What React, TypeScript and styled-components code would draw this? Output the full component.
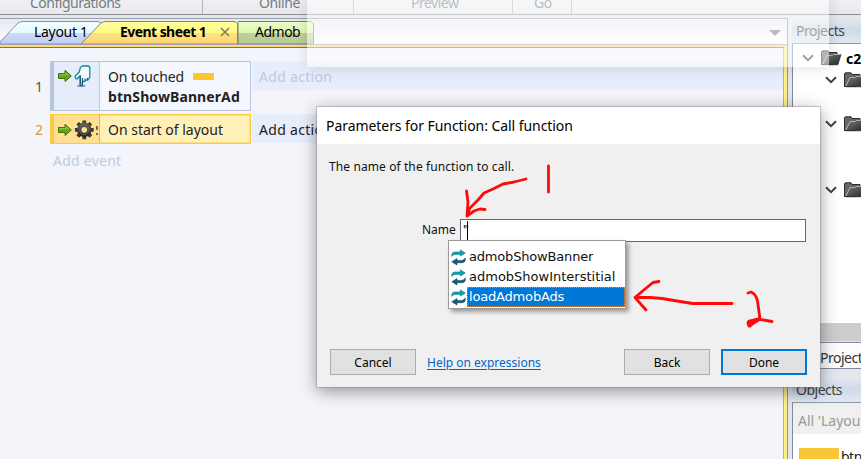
import React from "react";
import styled, { createGlobalStyle, css } from "styled-components";

const GlobalStyle = createGlobalStyle`
  *, *::before, *::after { box-sizing: border-box; }
  html, body { margin: 0; padding: 0; overflow: hidden; }
`;

const ui = `"Noto Sans", "Open Sans", sans-serif`;
const dialogFont = `"Noto Sans", "DejaVu Sans", sans-serif`;

const Window = styled.div`
  position: relative;
  width: 861px;
  height: 459px;
  overflow: hidden;
  display: flex;
  flex-direction: column;
  background: #e3e6ec;
  font-family: ${ui};
  font-size: 14px;
  color: #222;
`;

const Text = styled.span<{ $track?: number }>`
  white-space: pre;
  letter-spacing: ${(p) => p.$track ?? 0}px;
`;

/* Ribbon */
const Ribbon = styled.header`
  display: flex;
  flex: none;
  height: 15px;
  background: linear-gradient(#eef0f4, #e7e9ed);
  border-bottom: 1px solid #8f9094;
  overflow: hidden;
`;

const RibbonGroup = styled.div<{ $width: number; $pad: number }>`
  flex: none;
  width: ${(p) => p.$width}px;
  padding-left: ${(p) => p.$pad}px;
  border-right: 1px solid #b4b6ba;
  color: #777b82;
  line-height: 20px;
  margin-top: -7px;
`;

/* Workspace */
const Workspace = styled.div`
  display: flex;
  flex: 1;
  min-height: 0;
  padding-top: 3px;
`;

const Editor = styled.main`
  display: flex;
  flex-direction: column;
  flex: none;
  width: 788px;
  border-top: 1px solid #9a9fab;
  border-right: 1px solid #8e96a6;
`;

const TabStrip = styled.nav`
  display: flex;
  align-items: flex-end;
  flex: none;
  height: 26px;
  background: linear-gradient(#e6e9ee, #fdfdfe);
  border-bottom: 1px solid #a0a5b4;
`;

const Tab = styled.div<{ $width: number; $overlap?: number; $pad: number; $bold?: boolean }>`
  position: relative;
  display: flex;
  align-items: center;
  flex: none;
  width: ${(p) => p.$width}px;
  height: 24px;
  margin-left: ${(p) => -(p.$overlap ?? 0)}px;
  padding-left: ${(p) => p.$pad}px;
  padding-bottom: 1px;
  color: #000;
  font-weight: ${(p) => (p.$bold ? 700 : 400)};
`;

const TabShape = styled.svg`
  position: absolute;
  left: 0;
  top: 0;
`;

const TabContent = styled.div`
  position: relative;
  display: flex;
  align-items: center;
  gap: 14px;
`;

const TabMenu = styled.svg`
  margin: 0 6px 7px auto;
`;

const SheetFrame = styled.div`
  flex: 1;
  display: flex;
  border-right: 3px solid #fbf088;
  border-top: 2px solid #ffd978;
`;

const Sheet = styled.div`
  flex: 1;
  display: flex;
  flex-direction: column;
  border-top: 1px solid #77706c;
  border-right: 1px solid #aab0c0;
  background: #f4f5fb;
  padding: 13px 0 0 35px;
`;

const EventRow = styled.div<{ $height: number }>`
  display: flex;
  flex: none;
  height: ${(p) => p.$height}px;
  margin-bottom: 3px;
`;

const EventNumber = styled.div<{ $active?: boolean }>`
  display: flex;
  align-items: center;
  width: 15px;
  color: ${(p) => (p.$active ? "#de9a20" : "#754638")};
`;

const EventBlock = styled.div<{ $active?: boolean }>`
  display: flex;
  width: 201px;
  border: 1px solid #b7c5de;
  border-left-width: 4px;
  background: #f4f8fe;
  ${(p) =>
    p.$active &&
    css`
      border-color: #fdcb43;
      background: #fff0b8;
      box-shadow: inset 0 0 0 1px #ffdf80;
    `}
`;

const IconCell = styled.div<{ $active?: boolean }>`
  display: flex;
  width: 46px;
  height: 100%;
  padding: ${(p) => (p.$active ? 4 : 3)}px 0 0 4px;
  overflow: hidden;
  border-right: 1px solid ${(p) => (p.$active ? "#ddb853" : "#c1cad8")};
  background: ${(p) => (p.$active ? "#ffdf91" : "#e4edf9")};
  svg { flex: none; }
`;

const Condition = styled.div`
  flex: 1;
  padding: 5px 0 0 8px;
  line-height: 20px;
`;

const ConditionLine = styled.div`
  display: flex;
  align-items: center;
`;

const Swatch = styled.i`
  width: 21px;
  height: 7px;
  margin-left: 9px;
  margin-top: -1px;
  background: #fdc62e;
`;

const Action = styled.div<{ $dim?: boolean }>`
  flex: 1;
  height: 29px;
  margin-left: 1px;
  padding-left: 7px;
  line-height: 32px;
  background: #e7edfa;
  color: ${(p) => (p.$dim ? "#bdcae0" : "#222")};
`;

const AddEvent = styled.div`
  padding: 2px 0 0 18px;
  line-height: 24px;
  color: #bdcae0;
`;

/* Side panels */
const Sidebar = styled.aside`
  display: flex;
  flex-direction: column;
  flex: 1;
  margin-left: 4px;
  min-width: 0;
  overflow: hidden;
`;

const PanelTitle = styled.div`
  flex: none;
  height: 26px;
  padding-left: 4px;
  line-height: 26px;
  letter-spacing: -0.5px;
  color: #444;
  background: linear-gradient(#e5e9f0, #cfdae8 45%, #e0e8f2);
  border-bottom: 1px solid #9199a8;
`;

const Tree = styled.div`
  flex: none;
  height: 279px;
  padding-top: 3px;
  background: #fff;
  border-left: 1px solid #7f8ba0;
`;

const TreeRow = styled.div<{ $depth: number; $after?: number }>`
  display: flex;
  align-items: center;
  height: 22px;
  margin-bottom: ${(p) => p.$after ?? 0}px;
  padding-left: ${(p) => 9 + p.$depth * 23}px;
  font-weight: 700;
  color: #000;
  svg { flex: none; }
`;

const TreeGap = styled.span`
  flex: none;
  width: 7px;
`;

const ProjectName = styled.span`
  margin-left: 4px;
`;

const ScrollTrack = styled.div`
  flex: none;
  height: 18px;
  background: #cdcdcd;
  border-left: 1px solid #7f8ba0;
`;

const BottomTab = styled.div`
  flex: none;
  height: 27px;
  margin: 1px -4px 0 0;
  padding-left: 27px;
  line-height: 29px;
  letter-spacing: -0.5px;
  color: #333;
  background: #fdfdfe;
  border: 1px solid #7f8ba0;
`;

const ObjectsPanel = styled.section`
  display: flex;
  flex-direction: column;
  flex: 1;
  margin-top: 8px;
`;

const ObjectFilter = styled.div`
  flex: none;
  height: 31px;
  padding-left: 5px;
  line-height: 36px;
  background: #f0f0f0;
  border-left: 1px solid #7f8ba0;
  color: #9a9a9a;
`;

const ObjectList = styled.div`
  display: flex;
  gap: 2px;
  flex: 1;
  padding: 14px 0 0 6px;
  background: #fff;
  border-left: 1px solid #7f8ba0;
  color: #222;
  line-height: 17px;
  letter-spacing: -0.5px;
`;

const ObjectThumb = styled.i`
  flex: none;
  width: 40px;
  height: 14px;
  background: #f9c733;
`;

/* Floating layers */
const GhostWindow = styled.div`
  position: absolute;
  left: 307px;
  top: -10px;
  width: 522px;
  height: 77px;
  background: rgba(255, 255, 255, 0.5);
  box-shadow: 0 1px 14px rgba(0, 0, 0, 0.12);
`;

const Dialog = styled.section`
  position: absolute;
  left: 317px;
  top: 107px;
  width: 503px;
  height: 280px;
  display: flex;
  flex-direction: column;
  background: #f0f0f0;
  font-family: ${dialogFont};
  font-size: 12px;
  color: #111;
  box-shadow: 0 0 0 1px rgba(120, 120, 130, 0.35), 0 4px 16px rgba(0, 0, 0, 0.42);
`;

const DialogTitle = styled.h1`
  flex: none;
  margin: 0;
  height: 37px;
  padding-left: 9px;
  background: #fff;
  font-family: ${ui};
  font-size: 14px;
  font-weight: 400;
  line-height: 38px;
  color: #000;
`;

const Prompt = styled.p`
  margin: 13px 0 0 12px;
  line-height: 20px;
`;

const Field = styled.div`
  position: relative;
  display: flex;
  align-items: center;
  margin: 42px 14px 0 105px;
`;

const FieldName = styled.label`
  width: 38px;
  height: 20px;
  line-height: 17px;
`;

const Input = styled.div`
  display: flex;
  flex: 1;
  height: 23px;
  padding: 1px 0 0 2px;
  background: #fff;
  border: 1px solid #686868;
`;

const Quote = styled.span`
  width: 4px;
  color: #24384c;
  font-size: 12px;
  font-weight: 700;
  line-height: 17px;
  letter-spacing: -1px;
`;

const Caret = styled.i`
  width: 1px;
  height: 19px;
  background: #000;
`;

const Suggestions = styled.ul`
  position: absolute;
  left: 26px;
  top: 21px;
  width: 178px;
  height: 69px;
  margin: 0;
  padding: 6px 0 0 2px;
  list-style: none;
  background: #fff;
  border: 1px solid #999;
  box-shadow: 3px 3px 4px rgba(0, 0, 0, 0.35);
  font-family: "DejaVu Sans", sans-serif;
  font-size: 13px;
`;

const Suggestion = styled.li`
  display: flex;
  height: 20px;
  svg { flex: none; margin-top: 2px; }
`;

const SuggestionText = styled.span<{ $selected?: boolean }>`
  flex: 1;
  margin-left: 1px;
  padding-left: 2px;
  line-height: 20px;
  ${(p) =>
    p.$selected &&
    css`
      color: #fff;
      background: #0078d7;
      line-height: 17px;
      padding-left: 1px;
      border: 1px dotted #d98a50;
    `}
`;

const Buttons = styled.footer`
  display: flex;
  align-items: center;
  height: 26px;
  margin: auto 13px 12px;
`;

const Button = styled.button<{ $primary?: boolean; $push?: boolean }>`
  width: 86px;
  height: 26px;
  padding: 1px 0 0;
  background: #e1e1e1;
  border: ${(p) => (p.$primary ? "2px solid #0078d7" : "1px solid #adadad")};
  margin-left: ${(p) => (p.$push ? "auto" : p.$primary ? "11px" : "0")};
  font-family: ${dialogFont};
  font-size: 12px;
  line-height: 20px;
  color: #000;
`;

const HelpLink = styled.a`
  margin-left: 11px;
  color: #0066cc;
  text-decoration: underline;
  text-underline-offset: 2px;
`;

const Markup = styled.svg`
  position: absolute;
  left: 0;
  top: 0;
  pointer-events: none;
`;

const GreenArrow = () => (
  <svg width="15" height="22" viewBox="0 0 15 22">
    <path d="M.5 8.5H7V5.2L13.3 11L7 16.5V13.5H.5Z" fill="#68a615" stroke="#3d7212" />
    <path d="M1.5 9.7H8V7.8l3 2.8" fill="none" stroke="#9bcf3c" />
  </svg>
);

const HandIcon = () => (
  <svg width="19" height="23" viewBox="0 0 19 23">
    <path
      d="M7.5 2.2L9.5 1H15.5L16.8 2.5V12L15 15H13L11.5 16.5H9.4V20.5H7.2V10.5L4 14L2.3 13V11L6.2 7Z"
      fill="#f4fbff"
      stroke="#0e86a3"
      strokeWidth="1.3"
      strokeLinejoin="round"
    />
    <path d="M7.2 11V20.5H9.4V13M12 13.5V15.5M14.5 13V14.5" fill="none" stroke="#12455e" />
    <ellipse cx="8.3" cy="21" rx="4.5" ry="1.1" fill="#55717f" opacity=".7" />
  </svg>
);

const GearIcon = () => (
  <svg width="22" height="22" viewBox="0 0 22 22">
    <defs>
      <linearGradient id="gear" x2="0" y2="1">
        <stop offset="0" stopColor="#68625a" />
        <stop offset="1" stopColor="#26231f" />
      </linearGradient>
    </defs>
    <g fill="#3c3832">
      {[0, 45, 90, 135].map((a) => (
        <rect key={a} x="9.4" y="1.4" width="3.8" height="18.8" rx=".5" transform={`rotate(${a} 11.3 10.8)`} />
      ))}
    </g>
    <circle cx="11.3" cy="10.8" r="7.3" fill="url(#gear)" />
    <circle cx="11.3" cy="10.8" r="4.6" fill="none" stroke="#777067" strokeWidth=".8" />
    <circle cx="11.3" cy="10.8" r="2.9" fill="#ffdf91" />
  </svg>
);

/* Left edge of the object name, all that fits in the narrow column */
const NameSliver = ({ marks }: { marks: [number, number][] }) => (
  <svg width="3" height="20" viewBox="0 0 3 20">
    {marks.map(([y, h]) => (
      <rect key={y} x="1" y={y} width="2" height={h} fill="#5d4a3a" opacity=".8" />
    ))}
  </svg>
);

const FolderIcon = () => (
  <svg width="21" height="16" viewBox="0 0 21 16">
    <defs>
      <linearGradient id="folderFront" x2="1" y2="1">
        <stop offset="0" stopColor="#7b7b7b" />
        <stop offset="1" stopColor="#262626" />
      </linearGradient>
    </defs>
    <path d="M.5 15V1.5L1.5.8H7L8 2.5H16V6L12 14.5H.5Z" fill="#676767" stroke="#2b2b2b" />
    <path d="M2 14.8L6.3 6H12L13.5 4.5H20L16.8 14.8Z" fill="url(#folderFront)" stroke="#262626" strokeWidth=".7" />
    <path d="M2 14L6 5.7H11.5L13 4.4H19.5" fill="none" stroke="#cfcfcf" strokeWidth=".9" />
  </svg>
);

const Chevron = () => (
  <svg width="12" height="8" viewBox="0 0 12 8">
    <path d="M1 1.2L6 6.2L11 1.2" fill="none" stroke="#404040" strokeWidth="2" />
  </svg>
);

const FunctionIcon = () => (
  <svg width="15" height="17" viewBox="0 0 15 17">
    <path d="M.7 7.5V5.5Q1.2 2.9 4 2.9H9.3V.8L14.3 4L9.3 7.2V5.4H4.5Q2 5.4.7 7.5Z" fill="#11a0b0" stroke="#087386" strokeWidth=".5" />
    <path d="M14.3 9V11Q14 13.8 11 13.8H6V16L.8 12.8L6 9.6V11.4H10.5Q13 11.4 14.3 9Z" fill="#155e7b" stroke="#0b3d5e" strokeWidth=".5" />
  </svg>
);

const Gradient = ({ id, stops }: { id: string; stops: [string, string, string, string] }) => (
  <linearGradient id={id} x2="0" y2="1">
    <stop offset="0" stopColor={stops[0]} />
    <stop offset=".5" stopColor={stops[1]} />
    <stop offset=".51" stopColor={stops[2]} />
    <stop offset="1" stopColor={stops[3]} />
  </linearGradient>
);

const TreeFolder = ({ depth, after, name }: { depth: number; after?: number; name?: string }) => (
  <TreeRow $depth={depth} $after={after}>
    <Chevron />
    <TreeGap />
    <FolderIcon />
    {name && <ProjectName>{name}</ProjectName>}
  </TreeRow>
);

export default function App() {
  return (
    <Window>
      <GlobalStyle />
      <Ribbon>
        <RibbonGroup $width={203} $pad={30}><Text $track={-0.5}>Configurations</Text></RibbonGroup>
        <RibbonGroup $width={151} $pad={56}><Text $track={-0.4}>Online</Text></RibbonGroup>
        <RibbonGroup $width={159} $pad={57}><Text $track={-0.5}>Preview</Text></RibbonGroup>
        <RibbonGroup $width={59} $pad={21}><Text $track={-0.5}>Go</Text></RibbonGroup>
      </Ribbon>

      <Workspace>
        <Editor>
          <TabStrip>
            <Tab $width={102} $pad={34}>
              <TabShape width="102" height="24">
                <defs><Gradient id="layoutTab" stops={["#f3ffff", "#e6f9ff", "#cddcf9", "#c0ccf0"]} /></defs>
                <path d="M0 22L18 3Q20 1.5 23 1.5H98L101 3V24H0Z" fill="url(#layoutTab)" stroke="#8492a8" />
              </TabShape>
              <TabContent><Text $track={-0.3}>Layout 1</Text></TabContent>
            </Tab>
            <Tab $width={157} $overlap={21} $pad={39} $bold>
              <TabShape width="157" height="24">
                <defs><Gradient id="sheetTab" stops={["#ffff9b", "#fffa87", "#ffe37e", "#ffd574"]} /></defs>
                <path d="M0 24L20 3Q22 1.5 25 1.5H154L156.5 3V24Z" fill="url(#sheetTab)" stroke="#8a8573" />
              </TabShape>
              <TabContent>
                <Text $track={-0.56}>Event sheet 1</Text>
                <svg width="10" height="10"><path d="M1 1L9 9M9 1L1 9" stroke="#85805f" strokeWidth="1.7" /></svg>
              </TabContent>
            </Tab>
            <Tab $width={76} $pad={17}>
              <TabShape width="76" height="24">
                <defs><Gradient id="admobTab" stops={["#eaffc6", "#dcf5b4", "#bed09b", "#b8cb93"]} /></defs>
                <path d="M0 24V1.5H73L75.5 4V24Z" fill="url(#admobTab)" stroke="#77846d" />
              </TabShape>
              <TabContent><Text $track={-0.5}>Admob</Text></TabContent>
            </Tab>
            <TabMenu width="12" height="7"><path d="M0 0H12L6 6Z" fill="#777" /></TabMenu>
          </TabStrip>
          <SheetFrame>
            <Sheet>
              <EventRow $height={50}>
                <EventNumber>1</EventNumber>
                <EventBlock>
                  <IconCell><GreenArrow /><HandIcon /><TreeGap /><NameSliver marks={[[6, 1]]} /></IconCell>
                  <Condition>
                    <ConditionLine><Text $track={-0.12}>On touched</Text><Swatch /></ConditionLine>
                    <b><Text $track={0.1}>btnShowBannerAd</Text></b>
                  </Condition>
                </EventBlock>
                <Action $dim><Text $track={0.3}>Add action</Text></Action>
              </EventRow>
              <EventRow $height={30}>
                <EventNumber $active>2</EventNumber>
                <EventBlock $active>
                  <IconCell $active>
                    <GreenArrow />
                    <GearIcon />
                    <NameSliver marks={[[7, 4], [14, 2]]} />
                  </IconCell>
                  <Condition><Text>On start of layout</Text></Condition>
                </EventBlock>
                <Action><Text $track={0.3}>Add action</Text></Action>
              </EventRow>
              <AddEvent><Text $track={0.25}>Add event</Text></AddEvent>
            </Sheet>
          </SheetFrame>
        </Editor>

        <Sidebar>
          <PanelTitle>Projects</PanelTitle>
          <Tree>
            <TreeFolder depth={0} name="c2" />
            <TreeFolder depth={1} after={22} />
            <TreeFolder depth={1} after={44} />
            <TreeFolder depth={1} />
          </Tree>
          <ScrollTrack />
          <BottomTab>Projects</BottomTab>
          <ObjectsPanel>
            <PanelTitle>Objects</PanelTitle>
            <ObjectFilter><Text>All 'Layout</Text></ObjectFilter>
            <ObjectList><ObjectThumb />btn</ObjectList>
          </ObjectsPanel>
        </Sidebar>
      </Workspace>

      <GhostWindow />

      <Dialog>
        <DialogTitle><Text $track={-0.06}>Parameters for Function: Call function</Text></DialogTitle>
        <Prompt><Text $track={0.1}>The name of the function to call.</Text></Prompt>
        <Field>
          <FieldName>Name</FieldName>
          <Input><Quote>"</Quote><Caret /></Input>
          <Suggestions>
            <Suggestion><FunctionIcon /><SuggestionText><Text $track={-0.18}>admobShowBanner</Text></SuggestionText></Suggestion>
            <Suggestion><FunctionIcon /><SuggestionText><Text>admobShowInterstitial</Text></SuggestionText></Suggestion>
            <Suggestion><FunctionIcon /><SuggestionText $selected><Text $track={-0.18}>loadAdmobAds</Text></SuggestionText></Suggestion>
          </Suggestions>
        </Field>
        <Buttons>
          <Button>Cancel</Button>
          <HelpLink><Text>Help on expressions</Text></HelpLink>
          <Button $push>Back</Button>
          <Button $primary>Done</Button>
        </Buttons>
      </Dialog>

      <Markup width="861" height="459" fill="none" stroke="#ff0a0a" strokeWidth="2.8" strokeLinecap="round" strokeLinejoin="round">
        <path d="M526 179L514 182L503 184L493 189L484 193L478 200L470 208L467 215M466.5 191L468 202L467 216L474 211L480 209L485 209.5M548.5 166V192" />
        <path d="M732 303.5H693L683 302L671 300L662 298.5L650 297.5H635M659 281.5L653 282.5L645 289L635 297.5L646 310" />
        <path d="M748 293L751 292Q756 294 757.5 301L760 319L749 326Q747 323 749 321L758 319L772 321.5" />
        <path d="M749 322L755 320L750 326Z" fill="#ff0a0a" />
      </Markup>
    </Window>
  );
}
